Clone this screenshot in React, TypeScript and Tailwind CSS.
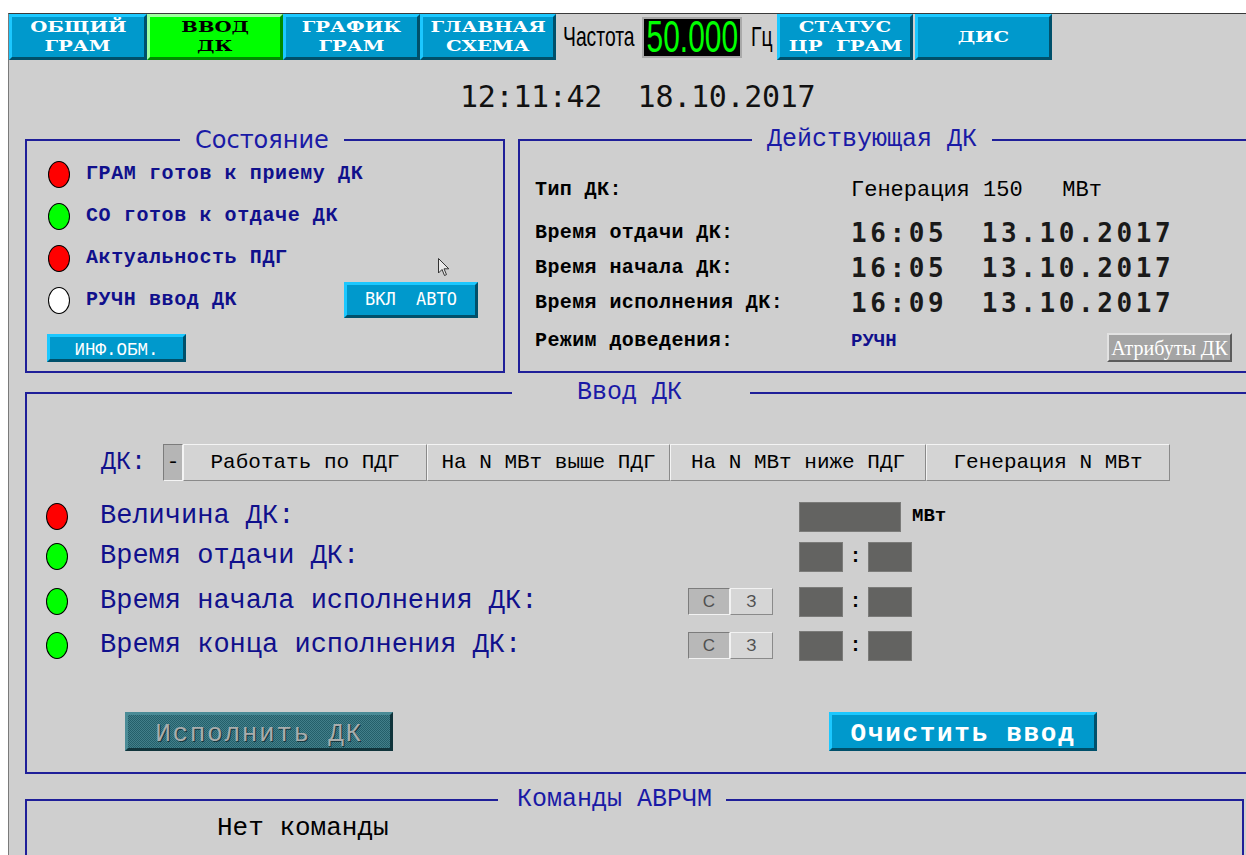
import React from "react";

const mono = "font-['Liberation_Mono',monospace]";
const sansMono = "font-['DejaVu_Sans_Mono',monospace]";
const blueBevel =
  "bg-[#0099cc] border-t-[#1cc8ff] border-l-[#1cc8ff] border-b-[#00506b] border-r-[#00506b]";
const navy = "text-[#10108c]";

function NavButton({ w, lines, active = false }: { w: string; lines: string[]; active?: boolean }) {
  const face = active
    ? "bg-[#00ff00] border-t-[#a0ffa0] border-l-[#a0ffa0] border-b-[#008c00] border-r-[#008c00] text-black"
    : `${blueBevel} text-white`;
  return (
    <div
      className={`${w} h-full shrink-0 border-[3px] ${face} flex flex-col items-center justify-center font-['DejaVu_Serif',serif] font-bold text-[14px] leading-[19px]`}
    >
      {lines.map((l) => (
        <span key={l} className="inline-block scale-x-[1.4] whitespace-pre">
          {l}
        </span>
      ))}
    </div>
  );
}

function Led({ color }: { color: string }) {
  return <span className={`block w-[22px] h-[27px] shrink-0 rounded-[50%] border-[1.5px] border-black ${color}`} />;
}

function Panel({
  title,
  legendClass,
  className,
  children,
}: {
  title: string;
  legendClass: string;
  className: string;
  children?: React.ReactNode;
}) {
  return (
    <fieldset className={`min-w-0 shrink-0 border-2 border-[#1f1f99] ${className}`}>
      <legend className={`leading-[26px] text-[#1a1aa6] whitespace-pre ${legendClass}`}>{title}</legend>
      {children}
    </fieldset>
  );
}

function Seg({ w, pressed = false, children }: { w: string; pressed?: boolean; children: React.ReactNode }) {
  const face = pressed
    ? "bg-[#b5b5b5] border-t-[#7c7c7c] border-l-[#7c7c7c] border-b-[#f4f4f4] border-r-[#f4f4f4] items-start pt-[2px]"
    : "bg-[#d4d4d4] border-t-[#f4f4f4] border-l-[#f4f4f4] border-b-[#8a8a8a] border-r-[#8a8a8a] items-center";
  return (
    <div
      className={`${w} h-full border ${face} flex justify-center ${mono} text-[21px] text-black whitespace-pre`}
    >
      {children}
    </div>
  );
}

function CZ() {
  return (
    <div className="flex h-[27px] w-[85px] font-['Liberation_Sans',sans-serif] text-[17px] text-[#505050]">
      <div className="w-[42px] flex items-center justify-center bg-[#b8b8b8] border border-t-[#7c7c7c] border-l-[#7c7c7c] border-b-[#f2f2f2] border-r-[#f2f2f2]">
        С
      </div>
      <div className="w-[43px] flex items-center justify-center bg-[#d6d6d6] border border-t-[#f2f2f2] border-l-[#f2f2f2] border-b-[#8a8a8a] border-r-[#8a8a8a]">
        З
      </div>
    </div>
  );
}

const inputBox = "h-[30px] bg-[#636361] border border-[#7b7b79]";

function DkRow({
  led,
  label,
  kind,
  cz = false,
  mt,
}: {
  led: string;
  label: string;
  kind: "value" | "time";
  cz?: boolean;
  mt: string;
}) {
  return (
    <div className={`${mt} flex h-[31px] items-center pl-[19px]`}>
      <Led color={led} />
      <span className={`ml-[32px] w-[588px] ${mono} text-[27px] ${navy} whitespace-pre`}>{label}</span>
      {cz ? <CZ /> : <div className="w-[85px]" />}
      <div className="ml-[26px] flex items-center">
        {kind === "value" ? (
          <>
            <div className={`w-[102px] ${inputBox}`} />
            <span className={`ml-[11px] ${mono} font-bold text-[19px] text-black`}>МВт</span>
          </>
        ) : (
          <>
            <div className={`w-[44px] ${inputBox}`} />
            <span className={`w-[25px] text-center ${mono} font-bold text-[20px] text-black`}>:</span>
            <div className={`w-[44px] ${inputBox}`} />
          </>
        )}
      </div>
    </div>
  );
}

const stateRows = [
  { color: "bg-[#ff0000]", text: "ГРАМ готов к приему ДК" },
  { color: "bg-[#00ff00]", text: "СО готов к отдаче ДК" },
  { color: "bg-[#ff0000]", text: "Актуальность ПДГ" },
  { color: "bg-white", text: "РУЧН ввод ДК" },
];

const label = `${mono} font-bold text-[20px] tracking-[0.4px] text-black whitespace-pre`;
const timeValue = `${sansMono} font-bold text-[26px] tracking-[3.6px] [word-spacing:-2px] text-[#1a1a1a] whitespace-pre`;

export default function App() {
  return (
    <div className="relative w-[1246px] h-[855px] overflow-hidden bg-white pt-[13px] pl-[8px]">
      <div className="h-full bg-[#cfcfcf] border-l border-t border-l-[#7a7a7a] border-t-[#3a3a3a]">
        {/* top navigation */}
        <div className="flex h-[46px] items-center">
          <NavButton w="w-[138px]" lines={["ОБЩИЙ", "ГРАМ"]} />
          <NavButton w="w-[136px]" lines={["ВВОД", "ДК"]} active />
          <NavButton w="w-[137px]" lines={["ГРАФИК", "ГРАМ"]} />
          <NavButton w="w-[136px]" lines={["ГЛАВНАЯ", "СХЕМА"]} />
          <div className="ml-[7px] w-[72px] shrink-0">
            <span className="inline-block origin-left scale-x-[0.69] font-['Liberation_Sans',sans-serif] text-[28px] leading-none text-black">
              Частота
            </span>
          </div>
          <div className="ml-[7px] w-[100px] h-[41px] shrink-0 border-2 border-[#a9a9a9] bg-black flex items-center justify-center">
            <span className="inline-block scale-x-[0.68] font-['Liberation_Sans',sans-serif] text-[44px] leading-none text-[#00ff00]">
              50.000
            </span>
          </div>
          <div className="ml-[9px] w-[21px] shrink-0">
            <span className="inline-block origin-left scale-x-[0.69] font-['Liberation_Sans',sans-serif] text-[28px] leading-none text-black">
              Гц
            </span>
          </div>
          <div className="ml-[5px] h-full flex">
            <NavButton w="w-[136px]" lines={["СТАТУС", "ЦР  ГРАМ"]} />
            <div className="ml-[2px] h-full flex">
              <NavButton w="w-[137px]" lines={["ДИС"]} />
            </div>
          </div>
        </div>

        {/* clock */}
        <div className="h-[67px] pt-[22px] pl-[451px]">
          <span className={`${sansMono} text-[30px] leading-[30px] tracking-[-0.3px] text-[#111] whitespace-pre`}>
            12:11:42  18.10.2017
          </span>
        </div>

        {/* state + active command */}
        <div className="flex ml-[16px] gap-[13px]">
          <Panel
            title="Состояние"
            legendClass="ml-[153px] px-[15px] font-['DejaVu_Sans',sans-serif] text-[24px]"
            className="w-[480px] h-[246px]"
          >
            <div className="flex flex-col">
              {stateRows.map((r, i) => (
                <div key={r.text} className="flex h-[42px] items-center pl-[21px]">
                  <Led color={r.color} />
                  <span className={`ml-[16px] ${mono} font-bold text-[20px] tracking-[0.6px] ${navy} whitespace-pre`}>
                    {r.text}
                  </span>
                  {i === 3 && (
                    <button
                      className={`ml-auto mr-[25px] w-[134px] h-[36px] border-[3px] ${blueBevel} text-white ${sansMono} text-[17px] whitespace-pre`}
                    >
                      ВКЛ  АВТО
                    </button>
                  )}
                </div>
              ))}
              <button
                className={`mt-[13px] ml-[20px] w-[139px] h-[28px] border-[3px] ${blueBevel} text-white ${mono} text-[17.5px]`}
              >
                ИНФ.ОБМ.
              </button>
            </div>
          </Panel>

          <Panel
            title="Действующая ДК"
            legendClass={`ml-[232px] px-[15px] ${mono} text-[25px]`}
            className="w-[740px] h-[246px]"
          >
            <div className="flex flex-col pl-[15px]">
              <div className="mt-[22px] flex h-[30px] items-center">
                <span className={`w-[316px] ${label}`}>Тип ДК:</span>
                <span className={`${mono} text-[22px] text-black whitespace-pre`}>Генерация 150   МВт</span>
              </div>
              <div className="mt-[13px] flex h-[30px] items-center">
                <span className={`w-[316px] ${label}`}>Время отдачи ДК:</span>
                <span className={timeValue}>16:05  13.10.2017</span>
              </div>
              <div className="mt-[5px] flex h-[30px] items-center">
                <span className={`w-[316px] ${label}`}>Время начала ДК:</span>
                <span className={timeValue}>16:05  13.10.2017</span>
              </div>
              <div className="mt-[5px] flex h-[30px] items-center">
                <span className={`w-[316px] ${label}`}>Время исполнения ДК:</span>
                <span className={timeValue}>16:09  13.10.2017</span>
              </div>
              <div className="mt-[8px] flex h-[30px] items-start">
                <span className={`w-[316px] self-center ${label}`}>Режим доведения:</span>
                <span className={`w-[256px] self-center ${mono} font-bold text-[19px] ${navy}`}>РУЧН</span>
                <button className="mt-[7px] w-[125px] h-[29px] bg-[#a4a4a4] border-2 border-t-[#e2e2e2] border-l-[#e2e2e2] border-b-[#5c5c5c] border-r-[#5c5c5c] text-white font-['Liberation_Serif',serif] text-[20px] leading-none whitespace-pre">
                  Атрибуты ДК
                </button>
              </div>
            </div>
          </Panel>
        </div>

        {/* command entry */}
        <div className="mt-[7px] ml-[16px]">
          <Panel
            title="Ввод ДК"
            legendClass={`ml-[485px] pl-[65px] pr-[68px] ${mono} text-[25px]`}
            className="w-[1240px] h-[394px]"
          >
            <div className="flex flex-col">
              <div className="mt-[38px] flex h-[37px] items-center pl-[74px]">
                <span className={`w-[62px] ${mono} text-[25px] ${navy}`}>ДК:</span>
                <div className="flex h-full">
                  <Seg w="w-[20px]" pressed>
                    -
                  </Seg>
                  <Seg w="w-[244px]">Работать по ПДГ</Seg>
                  <Seg w="w-[243px]">На N МВт выше ПДГ</Seg>
                  <Seg w="w-[256px]">На N МВт ниже ПДГ</Seg>
                  <Seg w="w-[244px]">Генерация N МВт</Seg>
                </div>
              </div>

              <DkRow mt="mt-[20px]" led="bg-[#ff0000]" label="Величина ДК:" kind="value" />
              <DkRow mt="mt-[9px]" led="bg-[#00ff00]" label="Время отдачи ДК:" kind="time" />
              <DkRow mt="mt-[14px]" led="bg-[#00ff00]" label="Время начала исполнения ДК:" kind="time" cz />
              <DkRow mt="mt-[13px]" led="bg-[#00ff00]" label="Время конца исполнения ДК:" kind="time" cz />

              <div className="mt-[51px] flex pl-[98px]">
                <button
                  disabled
                  className={`w-[268px] h-[39px] bg-[#30707b] bg-[image:repeating-conic-gradient(#245f6a_0%_25%,#427f8a_0%_50%)] bg-[length:2px_2px] border-[3px] border-t-[#4a8b96] border-l-[#4a8b96] border-b-[#10343b] border-r-[#10343b] ${mono} text-[26px] tracking-[1.7px] text-[#a9adad] [text-shadow:1px_1px_0_#17383f]`}
                >
                  Исполнить ДК
                </button>
                <button
                  className={`ml-[436px] w-[268px] h-[39px] border-[3px] ${blueBevel} ${mono} font-bold text-[26px] tracking-[1.7px] text-white`}
                >
                  Очистить ввод
                </button>
              </div>
            </div>
          </Panel>
        </div>

        {/* AVRChM commands */}
        <div className="mt-[13px] ml-[16px]">
          <Panel
            title="Команды АВРЧМ"
            legendClass={`ml-[471px] pl-[19px] pr-[14px] ${mono} text-[25px]`}
            className="w-[1219px] h-[100px]"
          >
            <div className="flex h-[30px] items-center pl-[190px]">
              <span className={`${mono} text-[26px] text-black`}>Нет команды</span>
            </div>
          </Panel>
        </div>
      </div>

      {/* mouse pointer */}
      <svg className="absolute left-[438px] top-[258px]" width="12" height="19" viewBox="0 0 12 19">
        <path d="M0.5 0.5 L0.5 15 L4 11.5 L6.5 17.5 L8.5 16.6 L6 10.8 L10.8 10.8 Z" fill="#e8e8e8" stroke="#333" strokeWidth="1" />
      </svg>
    </div>
  );
}
